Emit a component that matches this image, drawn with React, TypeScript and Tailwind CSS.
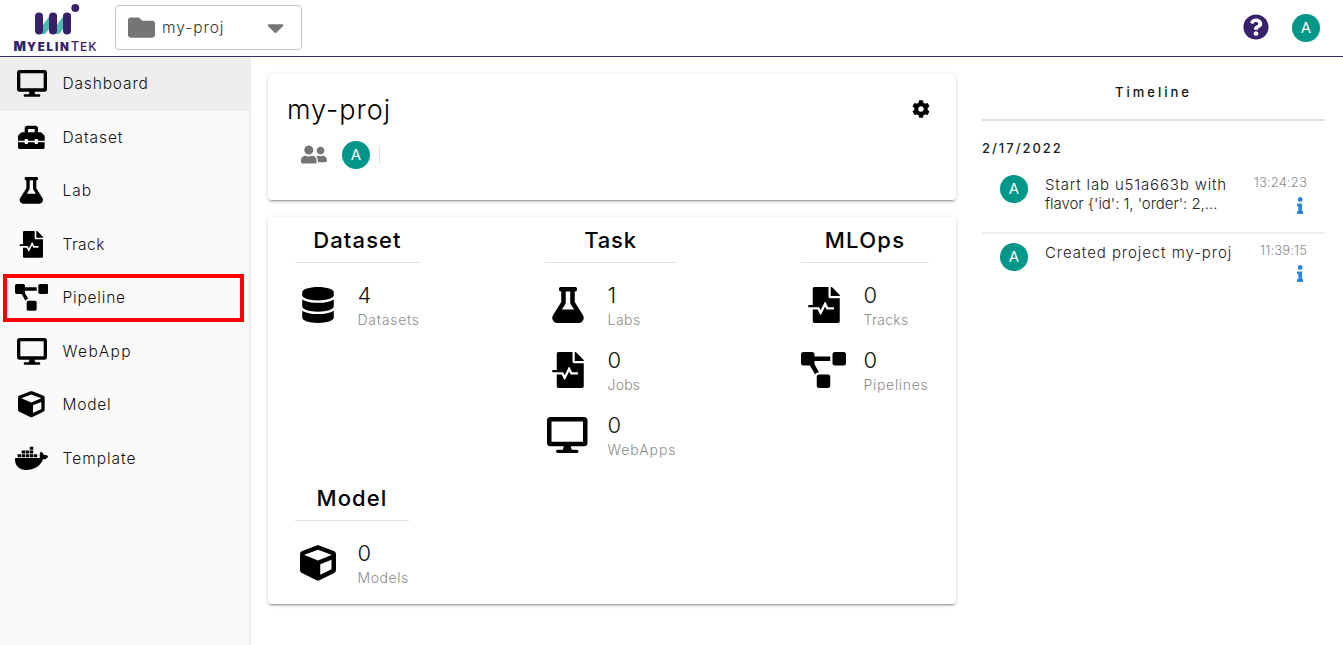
import type { ReactNode } from "react";
import {
  FaCaretDown,
  FaCog,
  FaCube,
  FaDatabase,
  FaDesktop,
  FaDocker,
  FaFileMedicalAlt,
  FaFlask,
  FaFolder,
  FaInfo,
  FaProjectDiagram,
  FaQuestionCircle,
  FaToolbox,
  FaUserFriends,
} from "react-icons/fa";
import type { IconType } from "react-icons";

const NAV: { label: string; icon: IconType; tracking: string; active?: boolean }[] = [
  { label: "Dashboard", icon: FaDesktop, tracking: "tracking-[0.85px]", active: true },
  { label: "Dataset", icon: FaToolbox, tracking: "tracking-[0.9px]" },
  { label: "Lab", icon: FaFlask, tracking: "tracking-[1px]" },
  { label: "Track", icon: FaFileMedicalAlt, tracking: "tracking-[0.5px]" },
  { label: "Pipeline", icon: FaProjectDiagram, tracking: "tracking-[0.8px]" },
  { label: "WebApp", icon: FaDesktop, tracking: "tracking-[1.4px]" },
  { label: "Model", icon: FaCube, tracking: "tracking-[0.75px]" },
  { label: "Template", icon: FaDocker, tracking: "tracking-[1px]" },
];

function Glyph({ icon: Icon }: { icon: IconType }) {
  let width = "w-[1em]";
  if (Icon === FaDesktop) width = "w-[1.125em]";
  if (Icon === FaDocker || Icon === FaProjectDiagram) width = "w-[1.25em]";
  return <Icon className={`h-[1em] shrink-0 ${width}`} />;
}

function Avatar() {
  return (
    <div className="flex size-7 shrink-0 items-center justify-center rounded-full bg-[#009688] pb-px text-[15px] leading-none text-white">
      A
    </div>
  );
}

function Logo() {
  return (
    <div className="flex w-[84px] flex-col items-center pt-1">
      <svg className="ml-[6px] block h-[31px] w-[46px]" viewBox="0 0 46 31">
        <path d="M4 26 L16 10 H22 V15 L10 30 H4Z M18 26 L30 10 H36 V15 L24 30 H18Z" fill="#4cb8ae" />
        <rect x="0" y="8.500" width="8" height="22" rx="4" fill="#38216a" />
        <rect x="14" y="8.500" width="8" height="22" rx="4" fill="#38216a" />
        <rect x="28" y="8.500" width="8" height="22" rx="4" fill="#38216a" />
        <circle cx="40.300" cy="4" r="3.900" fill="#38216a" />
      </svg>
      <div className="mt-[5px] ml-px flex h-[13px] w-[96px] items-baseline justify-center whitespace-nowrap leading-[13px] text-[#38216a]">
        <span className="text-[13px] font-black tracking-[1px]">M</span>
        <span className="text-[11.5px] font-black tracking-[1.8px]">YELIN</span>
        <span className="text-[13px] font-medium tracking-[0.7px]">T</span>
        <span className="text-[12px] font-medium tracking-[1px]">EK</span>
      </div>
    </div>
  );
}

function Header() {
  return (
    <header className="flex h-[57px] shrink-0 border-b border-[#3b2a63] pl-[13px]">
      <Logo />
      <div className="mt-[5px] ml-[18px] flex h-[45px] w-[187px] items-center rounded border border-[#c4c4c4] pl-3 text-[#757575]">
        <FaFolder className="size-[27px]" />
        <span className="ml-[7px] text-[15.5px] font-light tracking-[0.95px] text-[#333]">my-proj</span>
        <FaCaretDown className="mr-[12px] ml-auto size-[27px]" />
      </div>
      <div className="mt-[14px] mr-[23px] ml-auto flex gap-[23px]">
        <FaQuestionCircle className="size-[26px] text-[#38216a]" />
        <Avatar />
      </div>
    </header>
  );
}

function Sidebar() {
  return (
    <nav className="relative w-[251px] shrink-0 border-r-2 border-[#ededed] bg-[#fafafa]">
      {NAV.map(({ label, icon, tracking, active }) => (
        <div key={label} className={`flex h-[53.5px] items-center pl-[14.5px] ${active ? "bg-[#eeeeee]" : ""}`}>
          <span className="flex w-[34px] justify-center text-[26.67px] text-black">
            <Glyph icon={icon} />
          </span>
          <span className={`ml-[14px] text-[15.5px] font-light text-[#111] ${tracking}`}>{label}</span>
        </div>
      ))}
      <div className="absolute top-[217px] left-[3px] h-12 w-[241px] border-4 border-[#ff0000]" />
    </nav>
  );
}

function Card({ className, children }: { className: string; children: ReactNode }) {
  return (
    <section
      className={`rounded bg-white shadow-[0_3px_1px_-2px_rgba(0,0,0,0.2),0_2px_2px_0_rgba(0,0,0,0.14),0_1px_5px_0_rgba(0,0,0,0.12)] ${className}`}
    >
      {children}
    </section>
  );
}

type Stat = { icon: IconType; value: number; label: string; tracking: string };

function Group({ title, tracking, width, stats }: { title: string; tracking: string; width: string; stats: Stat[] }) {
  return (
    <div className={width}>
      <h2 className={`mb-[9.5px] flex h-[46px] items-center justify-center border-b border-[#e0e0e0] pt-[2px] text-[22px] font-medium ${tracking}`}>
        {title}
      </h2>
      {stats.map(({ icon, value, label, tracking: labelTracking }) => (
        <div key={label} className="flex h-[65px] items-center">
          <span className="flex w-[45px] shrink-0 justify-center text-[36px]">
            <Glyph icon={icon} />
          </span>
          <div className="ml-[17.5px] whitespace-nowrap font-light">
            <div className="text-[22px] leading-[30px] text-[#111]">{value}</div>
            <div className={`text-[14px] leading-5 text-[#8c8c8c] ${labelTracking}`}>{label}</div>
          </div>
        </div>
      ))}
    </div>
  );
}

function Entry({ lines, time, timeTracking, className }: { lines: [string, string][]; time: string; timeTracking: string; className: string }) {
  return (
    <div className={`flex pl-[18px] ${className}`}>
      <Avatar />
      <div className="ml-[17px] whitespace-nowrap text-[15px] leading-[19px] font-light text-[#222]">
        {lines.map(([text, tracking]) => (
          <div key={text} className={tracking}>
            {text}
          </div>
        ))}
      </div>
      <div className="-mt-px mr-[18px] ml-auto flex flex-col items-end">
        <span className={`text-[13px] leading-4 font-light text-[#888] ${timeTracking}`}>{time}</span>
        <FaInfo className="mt-[7px] mr-[4px] h-[17px] w-[6.4px] text-[#2a87e0]" />
      </div>
    </div>
  );
}

export default function App() {
  return (
    <div className="flex h-[645px] w-[1343px] flex-col overflow-hidden bg-white font-['Inter',sans-serif] text-black">
      <Header />
      <div className="flex flex-1">
        <Sidebar />
        <main className="ml-[17px] w-[688px] pt-[17px]">
          <Card className="h-[126px] px-[19px] pt-[19px]">
            <div className="flex items-center justify-between">
              <h1 className="text-[27px] leading-[34px] font-light tracking-[1px]">my-proj</h1>
              <FaCog className="mr-[7px] mb-[2px] size-[18px]" />
            </div>
            <div className="mt-[14px] flex items-center pl-[14px]">
              <FaUserFriends className="mb-[2px] h-[21px] w-[26px] text-[#757575]" />
              <div className="ml-[15px]">
                <Avatar />
              </div>
              <div className="ml-[9px] h-[18px] w-px bg-[#e0e0e0]" />
            </div>
          </Card>
          <Card className="mt-[17px] flex h-[387px] flex-wrap content-start gap-x-[125px] pl-[27px]">
            <Group
              title="Dataset"
              tracking="tracking-[1.1px]"
              width="w-[125px] h-[258px]"
              stats={[{ icon: FaDatabase, value: 4, label: "Datasets", tracking: "tracking-[0.75px]" }]}
            />
            <Group
              title="Task"
              tracking="tracking-[0.8px]"
              width="w-[131px] h-[258px]"
              stats={[
                { icon: FaFlask, value: 1, label: "Labs", tracking: "tracking-[0.5px]" },
                { icon: FaFileMedicalAlt, value: 0, label: "Jobs", tracking: "tracking-[0.2px]" },
                { icon: FaDesktop, value: 0, label: "WebApps", tracking: "tracking-[0.95px]" },
              ]}
            />
            <Group
              title="MLOps"
              tracking="tracking-[1.3px]"
              width="w-[128px] h-[258px]"
              stats={[
                { icon: FaFileMedicalAlt, value: 0, label: "Tracks", tracking: "tracking-[0.3px]" },
                { icon: FaProjectDiagram, value: 0, label: "Pipelines", tracking: "tracking-[0.7px]" },
              ]}
            />
            <Group
              title="Model"
              tracking="tracking-[1.1px]"
              width="w-[114px]"
              stats={[{ icon: FaCube, value: 0, label: "Models", tracking: "tracking-[0.55px]" }]}
            />
          </Card>
        </main>
        <aside className="ml-[26px] w-[343px] pt-[25px]">
          <h3 className="border-b-2 border-[#e0e0e0] pb-[17px] text-center text-[13px] leading-5 font-medium tracking-[3px] text-[#111]">
            Timeline
          </h3>
          <div className="mt-[17px] text-[13px] leading-5 font-medium tracking-[2px] text-[#222]">2/17/2022</div>
          <Entry
            className="mt-[17px] h-[59px] border-b-2 border-[#eeeeee]"
            lines={[
              ["Start lab u51a663b with", "tracking-[0.83px]"],
              ["flavor {'id': 1, 'order': 2,...", "tracking-[-0.05px]"],
            ]}
            time="13:24:23"
            timeTracking="tracking-[0.15px]"
          />
          <Entry
            className="mt-[9px]"
            lines={[["Created project my-proj", "tracking-[0.93px]"]]}
            time="11:39:15"
            timeTracking="tracking-[0.1px]"
          />
        </aside>
      </div>
    </div>
  );
}
